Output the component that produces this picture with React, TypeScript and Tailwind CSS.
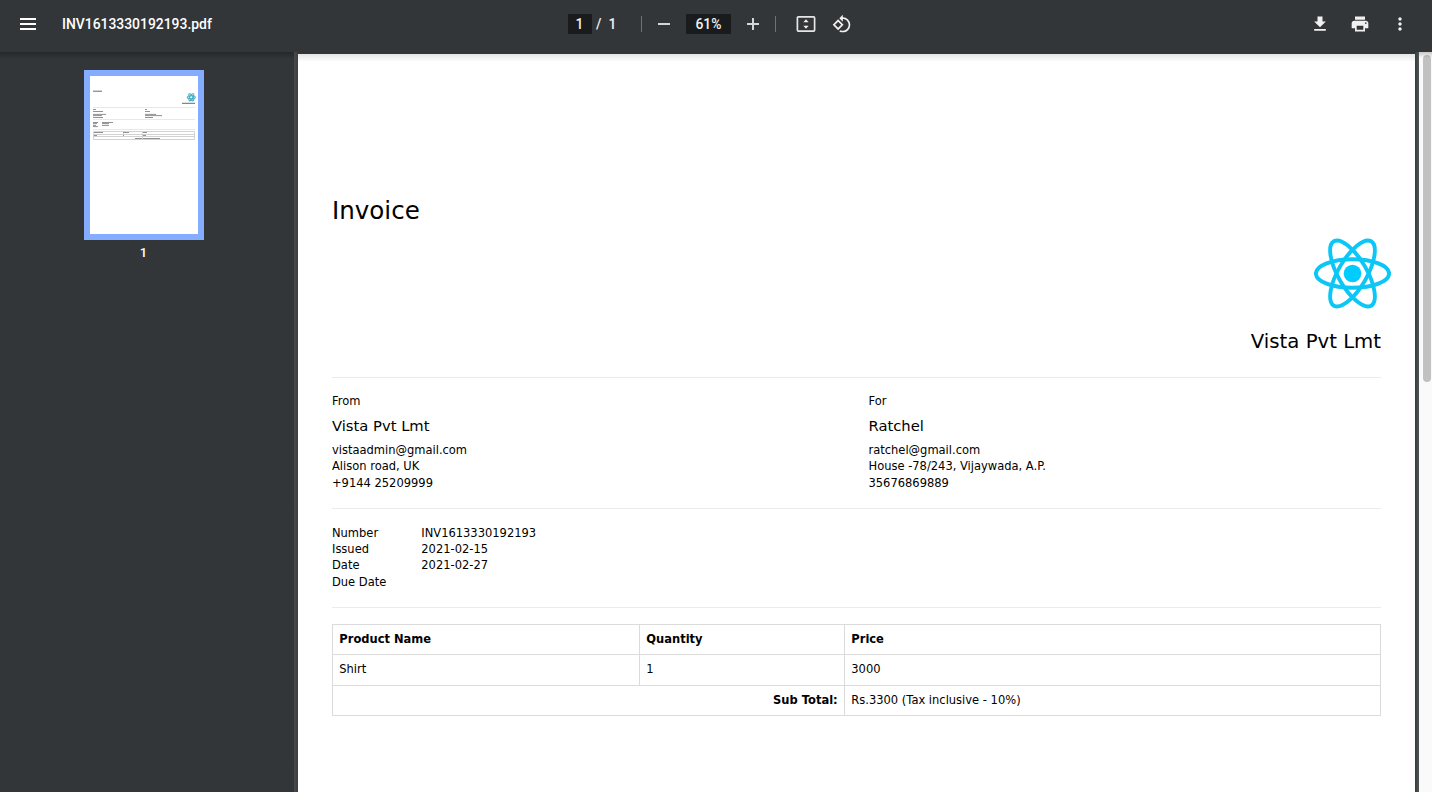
import type { ReactNode } from "react";
import { MdGetApp, MdPrint, MdMoreVert, MdRotate90DegreesCcw } from "react-icons/md";

function Toolbar() {
  return (
    <header className="relative z-10 flex h-[52px] shrink-0 items-center bg-[#323639] pb-1 font-[Roboto,sans-serif] text-[13.9px] font-medium text-white">
      <div className="flex w-[568px] items-center pl-5">
        <svg width="16" height="12" viewBox="0 0 16 12" fill="#fff">
          <path d="M0 0h16v2H0zM0 5h16v2H0zM0 10h16v2H0z" />
        </svg>
        <span className="ml-[26px]">INV1613330192193.pdf</span>
      </div>
      <div className="flex flex-1 items-center text-[#f1f1f1]">
        <span className="h-5 w-6 bg-[#191b1c] pr-px text-center leading-5">1</span>
        <span className="ml-1">/</span>
        <span className="ml-[7px] w-[9px]">1</span>
        <span className="ml-[24px] h-4 w-px bg-[#6f7274]" />
        <svg className="ml-4" width="12" height="12" fill="#d5d6d7">
          <path d="M0 5h12v2H0z" />
        </svg>
        <span className="ml-4 h-5 w-[45px] bg-[#191b1c] pr-px text-center leading-5">61%</span>
        <svg className="ml-4" width="12" height="12" fill="#d5d6d7">
          <path d="M0 5h5V0h2v5h5v2H7v5H5V7H0z" />
        </svg>
        <span className="ml-4 h-4 w-px bg-[#6f7274]" />
        <svg className="ml-5" width="20" height="16" viewBox="0 0 20 16" fill="#f1f1f1">
          <rect x="1.4" y="0.9" width="17.2" height="14.2" rx="1" fill="none" stroke="#e6e6e6" strokeWidth="1.7" />
          <path d="M10 3.2 12.6 6.2H7.4zM10 12.8 12.6 9.8H7.4z" />
        </svg>
        <MdRotate90DegreesCcw className="ml-4" size={20} />
      </div>
      <div className="flex items-center gap-5 pr-[22px] text-[#f1f1f1]">
        <MdGetApp size={20} />
        <MdPrint size={20} />
        <MdMoreVert size={20} />
      </div>
    </header>
  );
}

function ReactLogo({ className }: { className: string }) {
  return (
    <svg className={className} viewBox="-38.5 -36.5 77 72" fill="none" stroke="#0cc6f6" strokeWidth="3.9">
      <ellipse rx="36.6" ry="14.3" />
      <ellipse rx="37.2" ry="14.3" transform="rotate(60)" />
      <ellipse rx="37.2" ry="14.3" transform="rotate(120)" />
      <circle r="8.8" fill="#00ccff" stroke="none" />
    </svg>
  );
}

function Thumbnail() {
  return (
    <svg width="108" height="158" viewBox="0 0 108 158" className="bg-white">
      <g stroke="#e8e8e8" fill="none">
        <path d="M3 31.5h102M3 43.5h102M3 53.5h102" />
        <path d="M3.5 55.5h101v8h-101zM3.5 58.5h101M3.5 60.5h101M33.5 55.5v5M52.5 55.5v8" stroke="#d2d2d2" />
      </g>
      <g stroke="#777" strokeWidth="1" opacity="0.8">
        <path d="M3 15.2h9M92 27.3h13" stroke="#444" />
        <path d="M3 33.5h3M55 33.5h2M3 35.5h10M55 35.5h5M3 38.4h13M55 38.4h11M3 39.6h9M55 39.6h17M3 41.5h10M55 41.5h8" />
        <path d="M3 46.5h5M12 46.5h11M3 47.6h4M12 47.6h7M3 49.4h3M12 49.4h7M3 50.6h5" />
        <path d="M4 56.5h9M33 56.5h6M53 56.5h4M4 59.5h3M33 59.5h1M53 59.5h3M45 62.5h7M53 62.5h17" />
      </g>
      <g stroke="#45aec4" strokeWidth="1.1" fill="none" transform="translate(101.3 21.3)">
        <ellipse rx="4" ry="1.6" />
        <ellipse rx="4" ry="1.6" transform="rotate(60)" />
        <ellipse rx="4" ry="1.6" transform="rotate(120)" />
      </g>
    </svg>
  );
}

function Party({ label, name, lines }: { label: string; name: string; lines: string[] }) {
  return (
    <div>
      <div>{label}</div>
      <div className="mb-[3.7px] mt-[5px] text-[14.75px] leading-[24px]">{name}</div>
      {lines.map((l) => (
        <div key={l}>{l}</div>
      ))}
    </div>
  );
}

function Cell({ children, className = "" }: { children: ReactNode; className?: string }) {
  return <div className={`flex items-center px-[6.3px] ${className}`}>{children}</div>;
}

function Invoice() {
  return (
    <article className="mt-[2px] h-[738px] w-[1117px] bg-white px-[34px] pt-[138px] font-['DejaVu_Sans',sans-serif] text-[11.49px] leading-[16.3px] text-black">
      <h1 className="h-[45px] text-[24.55px] leading-[38px]">Invoice</h1>
      <div className="flex justify-end">
        <ReactLogo className="-mr-[10px] h-[72px] w-[77px]" />
      </div>
      <div className="mt-[18px] h-[50px] text-right text-[19.7px] leading-[30px]">Vista Pvt Lmt</div>
      <section className="grid h-[131px] grid-cols-[536.5px_1fr] border-t border-[#ebebeb] pt-[15px]">
        <Party label="From" name="Vista Pvt Lmt" lines={["vistaadmin@gmail.com", "Alison road, UK", "+9144 25209999"]} />
        <Party label="For" name="Ratchel" lines={["ratchel@gmail.com", "House -78/243, Vijaywada, A.P.", "35676869889"]} />
      </section>
      <section className="grid h-[99px] grid-cols-[89.3px_1fr] border-t border-[#ebebeb] pt-[15.7px]">
        <div>
          <div>Number</div>
          <div>Issued</div>
          <div>Date</div>
          <div>Due Date</div>
        </div>
        <div>
          <div>INV1613330192193</div>
          <div>2021-02-15</div>
          <div>2021-02-27</div>
        </div>
      </section>
      <section className="border-t border-[#ebebeb] pt-4">
        <div className="border border-[#dbdbdb]">
          <div className="grid h-[30px] grid-cols-[307px_205px_1fr] border-b border-[#dbdbdb] font-bold">
            <Cell className="border-r border-[#dbdbdb]">Product Name</Cell>
            <Cell className="border-r border-[#dbdbdb]">Quantity</Cell>
            <Cell>Price</Cell>
          </div>
          <div className="grid h-[31px] grid-cols-[307px_205px_1fr] border-b border-[#dbdbdb]">
            <Cell className="border-r border-[#dbdbdb] pb-[1.5px]">Shirt</Cell>
            <Cell className="border-r border-[#dbdbdb] pb-[1.5px]">1</Cell>
            <Cell className="pb-[1.5px]">3000</Cell>
          </div>
          <div className="grid h-[29px] grid-cols-[512px_1fr]">
            <Cell className="justify-end border-r border-[#dbdbdb] font-bold">Sub Total:</Cell>
            <Cell>Rs.3300 (Tax inclusive - 10%)</Cell>
          </div>
        </div>
      </section>
    </article>
  );
}

export default function App() {
  return (
    <div className="flex h-[792px] w-[1432px] flex-col overflow-hidden bg-[#323639]">
      <Toolbar />
      <div className="flex min-h-0 flex-1">
        <aside className="flex w-[294px] shrink-0 flex-col items-center bg-gradient-to-b from-[#26292b] via-[#323639] via-[1%] to-[#323639] pr-[6px] pt-[18px]">
          <div className="border-[6px] border-[#85adff]">
            <Thumbnail />
          </div>
          <div className="mt-1 pr-px font-[Roboto,sans-serif] text-[13px] font-medium leading-[18px] text-white">1</div>
        </aside>
        <main className="flex flex-1 overflow-hidden">
          <div className="w-1 bg-gradient-to-r from-[#484b4d] to-[#3c3f42]" />
          <div className="relative">
            <Invoice />
            <div className="absolute inset-x-0 top-[2px] h-2 bg-gradient-to-b from-black/10 to-transparent" />
          </div>
          <div className="w-1 bg-gradient-to-r from-[#363b3e] to-[#505558]" />
          <div className="relative flex flex-1 justify-center bg-[#fafafa] pl-[3px] pt-[3px]">
            <div className="h-[327px] w-2 rounded-full bg-[#c1c1c1]" />
            <div className="absolute inset-x-0 top-0 h-1.5 bg-gradient-to-b from-black/20 to-transparent" />
          </div>
        </main>
      </div>
    </div>
  );
}
